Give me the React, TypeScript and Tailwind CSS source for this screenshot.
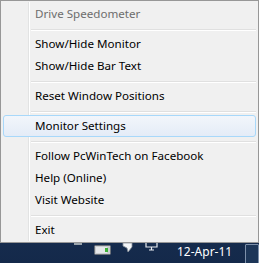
import React from "react";

type Entry = { kind: "item"; label: string; disabled?: boolean; active?: boolean } | { kind: "sep" };

const entries: Entry[] = [
  { kind: "item", label: "Drive Speedometer", disabled: true },
  { kind: "sep" },
  { kind: "item", label: "Show/Hide Monitor" },
  { kind: "item", label: "Show/Hide Bar Text" },
  { kind: "sep" },
  { kind: "item", label: "Reset Window Positions" },
  { kind: "sep" },
  { kind: "item", label: "Monitor Settings", active: true },
  { kind: "sep" },
  { kind: "item", label: "Follow PcWinTech on Facebook" },
  { kind: "item", label: "Help (Online)" },
  { kind: "item", label: "Visit Website" },
  { kind: "sep" },
  { kind: "item", label: "Exit" },
];

function Separator() {
  return (
    <div className="h-[8px] ml-[30px] mr-[2px] pt-[4px]">
      <div className="h-px bg-[#e0e0e0]" />
      <div className="h-px bg-white" />
    </div>
  );
}

function Item({ label, disabled, active }: { label: string; disabled?: boolean; active?: boolean }) {
  return (
    <div
      className={
        "mx-[2px] h-[22px] flex items-center pl-[31px] border rounded-[3px] " +
        (active
          ? "border-[#a8d8fa] bg-gradient-to-b from-[#f2f6fb] to-[#e4ecf7]"
          : "border-transparent")
      }
    >
      <span className={disabled ? "text-[#6d6d6d]" : "text-black"}>{label}</span>
    </div>
  );
}

export default function App() {
  return (
    <div
      className="w-[259px] h-[263px] overflow-hidden flex flex-col bg-gradient-to-b from-[#284870] to-[#14294a]"
      style={{ fontFamily: '"Noto Sans", "Open Sans", sans-serif' }}
    >
      <div className="relative h-[243px] shrink-0 bg-[#f0f0f0] border border-[#979797] pt-[2px] text-[11.6px] leading-[16px]">
        <div className="absolute left-[27px] top-[1px] bottom-[1px] w-[2px] flex">
          <div className="w-px bg-[#e2e3e3]" />
          <div className="w-px bg-white" />
        </div>
        <div className="relative flex flex-col">
          {entries.map((e, i) =>
            e.kind === "sep" ? (
              <Separator key={i} />
            ) : (
              <Item key={i} label={e.label} disabled={e.disabled} active={e.active} />
            )
          )}
        </div>
      </div>
      <div className="relative flex-1 flex items-center">
        <svg className="absolute left-[74px] top-0" width="8" height="3" viewBox="0 0 8 3">
          <rect x="0" y="0" width="8" height="2" fill="#9aa4ad" />
        </svg>
        <svg className="absolute left-[94px] top-[2px]" width="17" height="10" viewBox="0 0 17 10">
          <rect x="0.5" y="0.5" width="16" height="9" rx="1" fill="#c9ccd0" stroke="#6b7178" />
          <rect x="2" y="2" width="11" height="6" fill="#e6e8ea" />
          <rect x="11" y="3" width="3" height="4" fill="#3fb23a" />
        </svg>
        <svg className="absolute left-[122px] top-0" width="11" height="10" viewBox="0 0 11 10">
          <path d="M1 0 L10 0 L10 4 L6 9 L5 5 L1 3 Z" fill="#f4f6f8" stroke="#8a939c" strokeWidth="0.8" />
        </svg>
        <svg className="absolute left-[145px] top-0" width="13" height="8" viewBox="0 0 13 8">
          <path d="M1 0 V4 H12 V0" fill="none" stroke="#e8ecf0" strokeWidth="1.2" />
          <path d="M6.5 4 V7 M4 7 H9" stroke="#e8ecf0" strokeWidth="1.2" />
        </svg>
        <span className="absolute left-[177px] top-[1px] text-white text-[12px] leading-[16px]">12-Apr-11</span>
        <div className="absolute left-[245px] top-[1px] w-[14px] h-[20px] border border-[#7d90aa] rounded-[1px] bg-[#1d3658]" />
      </div>
    </div>
  );
}
